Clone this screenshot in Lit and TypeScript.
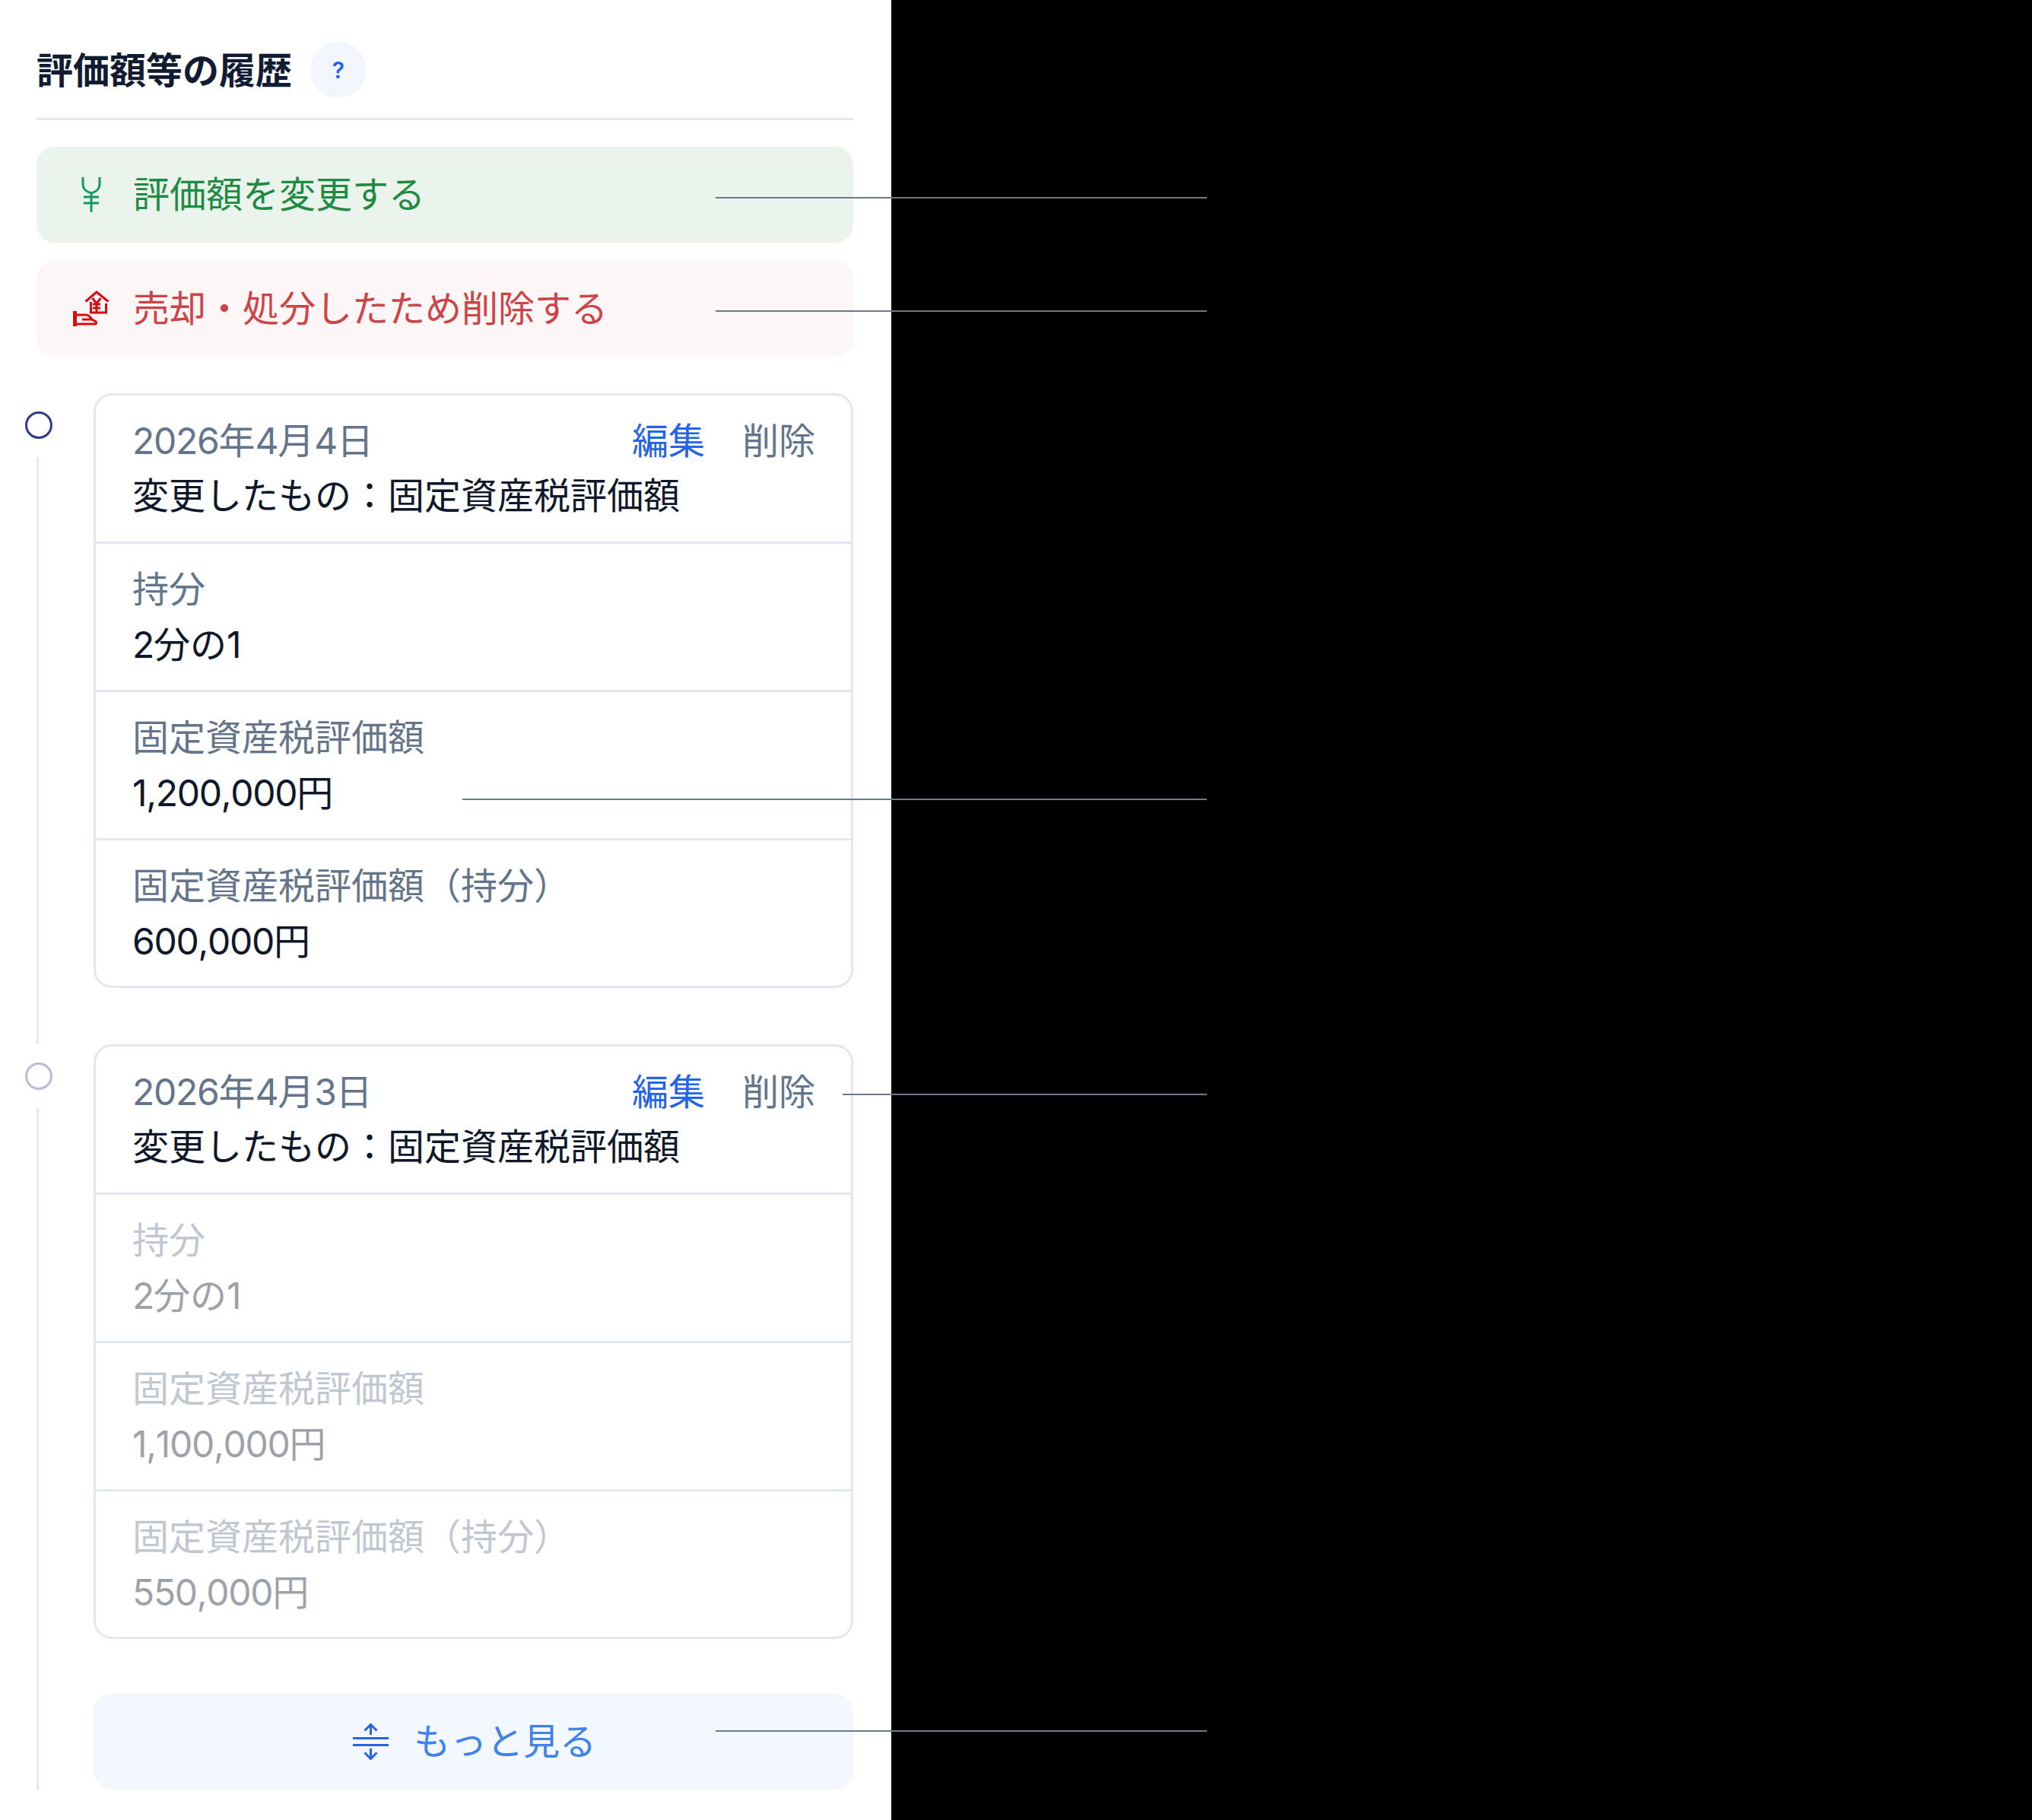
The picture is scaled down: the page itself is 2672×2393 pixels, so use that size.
import { LitElement, html, css, svg } from "lit";
import { customElement } from "lit/decorators.js";

const YEN = svg`<path d="M13 1v9c0 7 4 10 11 12c7-2 11-5 11-12V1M24 22v25M14 27h20M14 35h20" fill="none" stroke="#109a63" stroke-width="3"/>`;
const SELL = svg`<g fill="none" stroke="#d60d14" stroke-width="3"><path d="M16.500 14.500 31 2l15.500 12.500"/><path d="M23.500 15v14h20V17"/><path d="M25.500 10l5.500 7 5.500-7M31 17v12M26 18h10M26 23h10"/><path d="M2.500 27v20" stroke-width="5"/><path d="M3 32h14c4 0 6 3 8 6H12"/><path d="M3 44h26c2 0 2-2 1-3l-5-3"/></g>`;
const EXPAND = svg`<g fill="none" stroke="#2563eb" stroke-width="3"><path d="M0 19.500h47M0 28.500h47"/><path d="M23.500 15V2M15.500 9.500l8-8 8 8M23.500 33v13M15.500 38.500l8 8 8-8"/></g>`;

interface Row { label: string; value: string }
interface Rec { date: string; rows: Row[]; dim: boolean }

const RECORDS: Rec[] = [
  {
    date: "2026年4月4日",
    dim: false,
    rows: [
      { label: "持分", value: "2分の1" },
      { label: "固定資産税評価額", value: "1,200,000円" },
      { label: "固定資産税評価額（持分）", value: "600,000円" },
    ],
  },
  {
    date: "2026年4月3日",
    dim: true,
    rows: [
      { label: "持分", value: "2分の1" },
      { label: "固定資産税評価額", value: "1,100,000円" },
      { label: "固定資産税評価額（持分）", value: "550,000円" },
    ],
  },
];

const RULES = [
  { x: 941, y: 259, w: 646 },
  { x: 941, y: 408, w: 646 },
  { x: 608, y: 1050, w: 979 },
  { x: 1108, y: 1438, w: 479 },
  { x: 941, y: 2275, w: 646 },
];

/** Wrap digit runs so that they can be tracked tighter than the CJK around them. */
const nums = (text: string) =>
  text.split(/([0-9,]+)/).map((part, i) => (i % 2 ? html`<span class="num">${part}</span>` : part));

@customElement("app-root")
export class AppRoot extends LitElement {
  static styles = css`
    :host {
      display: block;
      position: relative;
      height: 2393px;
      background: #000;
      font-family: Inter, "Noto Sans CJK JP", sans-serif;
      font-size: 48px;
      line-height: 72px;
      color: #0f172a;
    }
    .panel {
      box-sizing: border-box;
      width: 1172px;
      height: 2393px;
      padding: 55px 50px 0 48px;
      background: #fff;
    }
    .head {
      display: flex;
      align-items: center;
      gap: 24px;
      padding-bottom: 26px;
      border-bottom: 3px solid #e2e8f0;
    }
    .title { margin: 0; padding-top: 2px; font-size: 48px; font-weight: 700; line-height: 72px; color: #111c33; }
    .help {
      box-sizing: border-box;
      width: 74px;
      height: 74px;
      padding-top: 1px;
      border-radius: 50%;
      background: #f3f7fd;
      color: #2563eb;
      font-size: 30px;
      font-weight: 600;
      line-height: 73px;
      text-align: center;
    }
    .actions { display: flex; flex-direction: column; gap: 24px; margin: 35px 0 48px; }
    .btn {
      display: flex;
      align-items: center;
      gap: 31px;
      height: 126px;
      padding-left: 48px;
      border-radius: 24px;
    }
    .btn svg, .more svg { width: 48px; height: 48px; flex: none; }
    .green { background: #ebf4ec; color: #1f8a41; }
    .red { background: #fcf6f6; color: #cc4448; }
    .item { display: flex; gap: 54px; margin-left: -15px; }
    .axis { display: flex; flex-direction: column; width: 36px; flex: none; }
    .dot {
      box-sizing: border-box;
      width: 36px;
      height: 36px;
      margin: 24px 0;
      border: 3px solid #2e3a8f;
      border-radius: 50%;
    }
    .dot.past { border-color: #b9bcd6; }
    .stem { flex: 1; width: 3px; margin-left: 15px; background: #e2e8f0; }
    .content { flex: 1; min-width: 0; display: flex; flex-direction: column; gap: 72px; }
    .item.first .content { padding-bottom: 74px; }
    .card { border: 3px solid #e2e8f0; border-radius: 24px; }
    .row { padding: 24px 47px 24px 48px; }
    .row + .row { border-top: 3px solid #e2e8f0; }
    .row:last-child { padding-bottom: 23px; }
    .top { display: flex; justify-content: space-between; }
    .date, .label { color: #64748b; }
    .value { margin-bottom: -2px; line-height: 74px; }
    .num { letter-spacing: -1.3px; font-kerning: none; }
    .links { display: flex; gap: 49px; }
    .edit { color: #2563eb; }
    .del { color: #64748b; }
    .dim .label, .dim .value { opacity: 0.4; }
    .more {
      display: flex;
      align-items: center;
      justify-content: center;
      gap: 32px;
      box-sizing: border-box;
      height: 126px;
      padding: 0 0 1px 3px;
      border-radius: 24px;
      background: #f3f7fe;
      color: #3f82ec;
    }
    .rule { position: absolute; height: 2px; background: #6b7b8c; }
  `;

  private card(r: Rec) {
    return html`<div class="card">
      <div class="row">
        <div class="top">
          <span class="date">${nums(r.date)}</span>
          <span class="links"><span class="edit">編集</span><span class="del">削除</span></span>
        </div>
        <div>変更したもの：固定資産税評価額</div>
      </div>
      ${r.rows.map(
        (x) => html`<div class="row ${r.dim ? "dim" : ""}">
          <div class="label">${x.label}</div>
          <div class="value">${nums(x.value)}</div>
        </div>`
      )}
    </div>`;
  }

  render() {
    return html`<div class="panel">
        <div class="head">
          <h2 class="title">評価額等の履歴</h2>
          <div class="help">?</div>
        </div>
        <div class="actions">
          <div class="btn green"><svg viewBox="0 0 48 48">${YEN}</svg>評価額を変更する</div>
          <div class="btn red"><svg viewBox="0 0 48 48">${SELL}</svg>売却・処分したため削除する</div>
        </div>
        <div class="item first">
          <div class="axis"><div class="dot"></div><div class="stem"></div></div>
          <div class="content">${this.card(RECORDS[0])}</div>
        </div>
        <div class="item">
          <div class="axis"><div class="dot past"></div><div class="stem"></div></div>
          <div class="content">
            ${this.card(RECORDS[1])}
            <div class="more"><svg viewBox="0 0 48 48">${EXPAND}</svg>もっと見る</div>
          </div>
        </div>
      </div>
      ${RULES.map(
        (l) => html`<div class="rule" style="left:${l.x}px;top:${l.y}px;width:${l.w}px"></div>`
      )}`;
  }
}
